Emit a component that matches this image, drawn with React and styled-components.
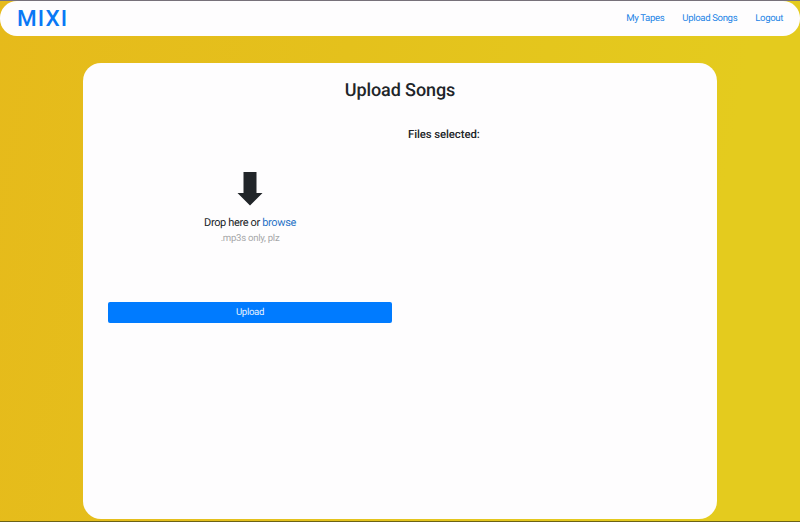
import React from "react";
import styled, { createGlobalStyle } from "styled-components";

const GlobalStyle = createGlobalStyle`
  *, *::before, *::after { box-sizing: border-box; }
  body {
    margin: 0;
    font-family: Roboto, sans-serif;
    color: #212529;
    text-rendering: geometricPrecision;
  }
`;

const Page = styled.div`
  display: flex;
  flex-direction: column;
  height: 522px;
  overflow: hidden;
  border-top: 1px solid #77717a;
  border-bottom: 1px solid #6b6216;
  background: linear-gradient(100deg, #e6ba1b 0%, #e4c11c 40%, #e4cb1e 85%);
`;

const NavBar = styled.header`
  display: flex;
  flex: none;
  align-items: center;
  justify-content: space-between;
  height: 35px;
  padding: 0 17px 0 17px;
  border-radius: 17px;
  background: #fefdfe;
`;

const Brand = styled.a`
  color: #0878f5;
  font-size: 22.5px;
  font-weight: 500;
  line-height: 34px;
  letter-spacing: 1.1px;
`;

const NavLinks = styled.nav`
  display: flex;
  gap: 18px;
`;

const NavLink = styled.a`
  color: #2484e6;
  font-size: 9.6px;
  line-height: 14px;
  letter-spacing: -0.36px;
`;

const Card = styled.main`
  flex: none;
  width: 634px;
  height: 456px;
  margin: 27px 0 0 83px;
  padding: 15px 25px 0;
  border-radius: 18px;
  background: #fefdfe;
`;

const Title = styled.h1`
  margin: 0;
  font-size: 18px;
  font-weight: 500;
  line-height: 25px;
  letter-spacing: -0.1px;
  text-align: center;
`;

const Columns = styled.div`
  display: grid;
  grid-template-columns: 284px 284px;
  gap: 16px;
  margin-top: 24px;
`;

const UploadColumn = styled.section`
  display: flex;
  flex-direction: column;
`;

const DropZone = styled.div`
  display: flex;
  flex-direction: column;
  align-items: center;
  height: 175px;
  padding-top: 45px;
`;

const DropText = styled.p`
  margin: 8px 0 0;
  font-size: 11px;
  line-height: 17px;
  letter-spacing: -0.36px;
`;

const Browse = styled.span`
  color: #2b74c7;
`;

const Hint = styled.p`
  margin: 0;
  color: #a6a7a9;
  font-size: 9.6px;
  line-height: 15px;
  letter-spacing: -0.28px;
`;

const UploadButton = styled.button`
  height: 21px;
  padding: 0;
  border: 0;
  border-radius: 2px;
  background: #007bff;
  color: #e6f2ff;
  font: 400 9.6px/20px Roboto, sans-serif;
  letter-spacing: -0.3px;
  text-rendering: inherit;
`;

const FilesTitle = styled.h2`
  margin: 0;
  font-size: 11.4px;
  font-weight: 500;
  line-height: 14px;
  letter-spacing: -0.1px;
`;

const DownArrow = () => (
  <svg width="26" height="34" viewBox="0 0 26 34" fill="#212529" aria-hidden="true">
    <path d="M6.5 0H19.5V21H25.5L13 33.5L.5 21H6.5Z" />
  </svg>
);

const links = ["My Tapes", "Upload Songs", "Logout"];

export default function App() {
  return (
    <>
      <GlobalStyle />
      <Page>
        <NavBar>
          <Brand>MIXI</Brand>
          <NavLinks>
            {links.map((label) => (
              <NavLink key={label}>{label}</NavLink>
            ))}
          </NavLinks>
        </NavBar>
        <Card>
          <Title>Upload Songs</Title>
          <Columns>
            <UploadColumn>
              <DropZone>
                <DownArrow />
                <DropText>
                  Drop here or <Browse>browse</Browse>
                </DropText>
                <Hint>.mp3s only, plz</Hint>
              </DropZone>
              <UploadButton type="button">Upload</UploadButton>
            </UploadColumn>
            <FilesTitle>Files selected:</FilesTitle>
          </Columns>
        </Card>
      </Page>
    </>
  );
}
